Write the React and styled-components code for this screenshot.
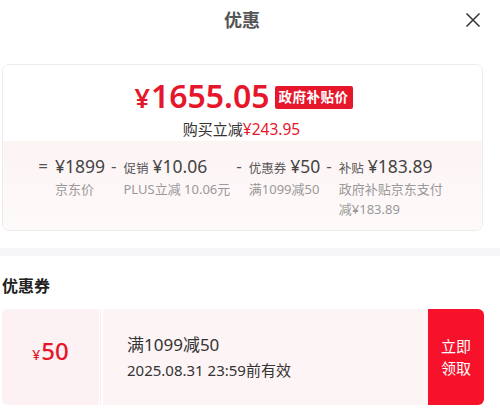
import React from "react";
import styled, { createGlobalStyle } from "styled-components";

const GlobalStyle = createGlobalStyle`
  body {
    margin: 0;
    background: #fff;
    font-family: "Noto Sans", "Noto Sans CJK SC", sans-serif;
  }
`;

const breakdown = [
  { op: "=", amount: "¥1899", sub: "京东价" },
  { op: "-", label: "促销", amount: "¥10.06", sub: "PLUS立减 10.06元" },
  { op: "-", label: "优惠券", amount: "¥50", sub: "满1099减50" },
  { op: "-", label: "补贴", amount: "¥183.89", sub: "政府补贴京东支付减¥183.89", narrow: true },
];

function App() {
  return (
    <Page>
      <GlobalStyle />
      <Header>
        <Title>优惠</Title>
        <Close aria-label="关闭">
          <svg width="16" height="16" viewBox="0 0 16 16">
            <path d="M1.5 1.5 L14.5 14.5 M14.5 1.5 L1.5 14.5" stroke="#333" strokeWidth="1.5" fill="none" />
          </svg>
        </Close>
      </Header>

      <PriceCard>
        <PriceTop>
          <PriceLine>
            <Price>
              <Yen>¥</Yen>1655.05
            </Price>
            <Badge>政府补贴价</Badge>
          </PriceLine>
          <Saving>
            购买立减<Red>¥243.95</Red>
          </Saving>
        </PriceTop>
        <Breakdown>
          {breakdown.map((item, i) => (
            <React.Fragment key={i}>
              <Op>{item.op}</Op>
              <Item $narrow={item.narrow}>
                <ItemHead>
                  {item.label && <ItemLabel>{item.label}</ItemLabel>}
                  <ItemAmount>{item.amount}</ItemAmount>
                </ItemHead>
                <ItemSub>{item.sub}</ItemSub>
              </Item>
            </React.Fragment>
          ))}
        </Breakdown>
      </PriceCard>

      <Divider />

      <SectionTitle>优惠券</SectionTitle>
      <Coupon>
        <CouponValue>
          <SmallYen>¥</SmallYen>50
        </CouponValue>
        <CouponBody>
          <CouponName>满1099减50</CouponName>
          <CouponDate>2025.08.31 23:59前有效</CouponDate>
        </CouponBody>
        <ClaimButton>
          立即
          <br />
          领取
        </ClaimButton>
      </Coupon>
    </Page>
  );
}

export default App;

const Page = styled.div`
  width: 500px;
  height: 414px;
  overflow: hidden;
  color: #333;
`;

const Header = styled.div`
  position: relative;
  height: 38px;
  display: flex;
  align-items: center;
  justify-content: center;
  padding-right: 16px;
`;

const Title = styled.div`
  font-size: 18px;
  font-weight: 700;
  color: #555;
`;

const Close = styled.div`
  position: absolute;
  right: 19px;
  top: 12px;
  width: 16px;
  height: 16px;
  display: flex;
`;

const PriceCard = styled.div`
  margin: 26px 17px 0 2px;
  border: 1px solid #ececec;
  border-radius: 7px;
  overflow: hidden;
`;

const PriceTop = styled.div`
  height: 76px;
  display: flex;
  flex-direction: column;
  align-items: center;
  padding-top: 13px;
  box-sizing: border-box;
  background: #fff;
`;

const PriceLine = styled.div`
  display: flex;
  align-items: center;
  gap: 5px;
  height: 36px;
  margin-left: 2px;
`;

const Price = styled.div`
  font-family: "Noto Sans", sans-serif;
  font-size: 32px;
  font-weight: 600;
  color: #e6162b;
  line-height: 1;
`;

const Yen = styled.span`
  font-size: 27px;
  margin-right: 1px;
`;

const Badge = styled.div`
  background: #e6162b;
  color: #fff;
  font-size: 13.5px;
  font-weight: 700;
  border-radius: 2px;
  padding: 0 4px;
  height: 23px;
  line-height: 23px;
  letter-spacing: 0.5px;
  margin-top: 2px;
`;

const Saving = styled.div`
  font-size: 15px;
  color: #333;
  margin-top: 4px;
  margin-right: 2px;
`;

const Red = styled.span`
  color: #e6162b;
  font-size: 15.5px;
`;

const Breakdown = styled.div`
  height: 89px;
  box-sizing: border-box;
  padding-top: 13px;
  display: flex;
  justify-content: center;
  align-items: flex-start;
  gap: 6px;
  background: linear-gradient(180deg, #fdf4f4 0%, #fefafa 100%);
  padding-left: 2px;
`;

const Op = styled.div`
  font-size: 17px;
  color: #555;
  line-height: 24px;
  margin-right: 1px;
`;

const Item = styled.div`
  display: flex;
  flex-direction: column;
  max-width: ${(p) => (p.$narrow ? "110px" : "none")};
`;

const ItemHead = styled.div`
  display: flex;
  align-items: baseline;
  gap: 4px;
  height: 24px;
  line-height: 24px;
  white-space: nowrap;
`;

const ItemLabel = styled.span`
  font-size: 12.5px;
  color: #555;
`;

const ItemAmount = styled.span`
  font-size: 17.5px;
  color: #444;
`;

const ItemSub = styled.div`
  margin-top: 1px;
  font-size: 13px;
  line-height: 20px;
  color: #999;
`;

const Divider = styled.div`
  height: 8px;
  background: #f6f6f9;
  margin-top: 17px;
`;

const SectionTitle = styled.div`
  font-size: 16px;
  font-weight: 700;
  color: #222;
  padding-left: 2px;
  margin-top: 19px;
  line-height: 22px;
`;

const Coupon = styled.div`
  display: flex;
  margin: 12px 16px 0 2px;
  height: 96px;
`;

const CouponValue = styled.div`
  position: relative;
  width: 97px;
  background: #fdf2f3;
  border-radius: 5px 0 0 5px;
  display: flex;
  align-items: baseline;
  justify-content: center;
  padding-top: 30px;
  box-sizing: border-box;
  font-size: 24px;
  font-weight: 500;
  color: #e6162b;
  line-height: 1;
  margin-right: 4px;

  &::after {
    content: "";
    position: absolute;
    right: -2px;
    top: 0;
    bottom: 0;
    width: 1px;
    background: #fcecee;
  }
`;

const SmallYen = styled.span`
  font-size: 14px;
  margin-right: 1px;
`;

const CouponBody = styled.div`
  flex: 1;
  background: #fdf4f5;
  display: flex;
  flex-direction: column;
  justify-content: center;
  padding-left: 24px;
  gap: 3px;
`;

const CouponName = styled.div`
  font-size: 17px;
  color: #333;
  line-height: 22px;
`;

const CouponDate = styled.div`
  font-size: 15px;
  color: #333;
  line-height: 22px;
`;

const ClaimButton = styled.div`
  width: 56px;
  background: #f5122a;
  color: #fff;
  border-radius: 0 6px 6px 0;
  display: flex;
  align-items: center;
  justify-content: center;
  text-align: center;
  font-size: 15px;
  line-height: 22px;
`;
